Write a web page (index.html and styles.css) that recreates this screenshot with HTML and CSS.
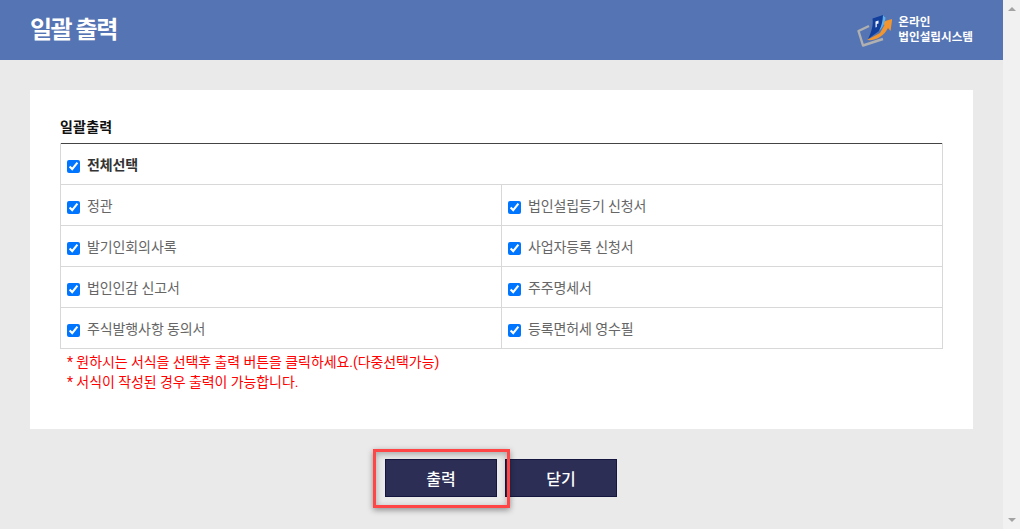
FILE: index.html
```html
<!DOCTYPE html>
<html lang="ko">
<head>
<meta charset="utf-8">
<title>일괄 출력</title>
<link rel="stylesheet" href="styles.css">
</head>
<body>
<div class="window">
  <main class="page">
    <header class="topbar">
      <h1 class="topbar-title">일괄 출력</h1>
      <div class="brand">
        <svg class="brand-logo" width="36" height="36" viewBox="0 1 36 36">
          <path d="M13 15 L2.5 20 L7 34.5 L27 28" fill="none" stroke="#b0b0b0" stroke-width="2.4" stroke-linejoin="round"/>
          <path d="M11 29 L24 22 L28.5 14 L25.5 11 L36.3 8 L34.5 20 L32 17 C28 25 20 30 11 29 Z" fill="#f0952f"/>
          <path d="M16.5 7.5 L27 4 L29 6 C28.5 12 26.5 17 23 20 L12 28 C15.5 21 17.5 14 16.5 7.5 Z" fill="#123f9c"/>
          <path d="M27 4 L29.5 6.5 C29 12 27 17 23 20 C25.5 15 26.8 10 27 4 Z" fill="#5fb0e8"/>
          <path d="M19.5 10.5 L22.5 9.6 L22.5 12.4 L20.8 12.9 L20.8 16 L19.5 16.4 Z" fill="#f2f5ff"/>
        </svg>
        <div class="brand-text">온라인<br>법인설립시스템</div>
      </div>
    </header>
    <section class="card">
      <h2 class="card-title">일괄출력</h2>
      <table class="forms">
        <tbody>
          <tr><td colspan="2" class="all"><label class="opt"><input type="checkbox" checked>전체선택</label></td></tr>
          <tr>
            <td><label class="opt"><input type="checkbox" checked>정관</label></td>
            <td><label class="opt"><input type="checkbox" checked>법인설립등기 신청서</label></td>
          </tr>
          <tr>
            <td><label class="opt"><input type="checkbox" checked>발기인회의사록</label></td>
            <td><label class="opt"><input type="checkbox" checked>사업자등록 신청서</label></td>
          </tr>
          <tr>
            <td><label class="opt"><input type="checkbox" checked>법인인감 신고서</label></td>
            <td><label class="opt"><input type="checkbox" checked>주주명세서</label></td>
          </tr>
          <tr>
            <td><label class="opt"><input type="checkbox" checked>주식발행사항 동의서</label></td>
            <td><label class="opt"><input type="checkbox" checked>등록면허세 영수필</label></td>
          </tr>
        </tbody>
      </table>
      <p class="note">* 원하시는 서식을 선택후 출력 버튼을 클릭하세요.(다중선택가능)</p>
      <p class="note">* 서식이 작성된 경우 출력이 가능합니다.</p>
    </section>
    <div class="actions">
      <div class="highlighted">
        <button class="btn" type="button">출력</button>
        <span class="highlight"></span>
      </div>
      <button class="btn" type="button">닫기</button>
    </div>
  </main>
  <aside class="scrollbar">
    <span class="arrow arrow-up"></span>
    <span class="arrow arrow-down"></span>
  </aside>
</div>
</body>
</html>
```
FILE: styles.css
```css
* { box-sizing: border-box; }
html, body { margin: 0; height: 100%; overflow: hidden; }
body {
  font-family: "Roboto", "Noto Sans CJK KR", sans-serif;
  background: #eaeaea;
}
.window { display: flex; height: 529px; }
.page { width: 1003px; flex: none; }
.topbar {
  height: 60px;
  background: #5574b3;
  display: flex;
  align-items: center;
  justify-content: space-between;
  padding: 0 30px;
}
.topbar-title {
  margin: -5px 0 0;
  font-size: 24px;
  font-weight: 700;
  color: #fff;
  letter-spacing: -1.5px;
}
.brand { display: flex; align-items: center; gap: 6px; }
.brand-logo { display: block; }
.brand-text {
  font-size: 11.6px;
  font-weight: 700;
  line-height: 15px;
  color: #fff;
  margin-top: -1px;
}
.card {
  margin: 30px 30px 0;
  height: 339px;
  background: #fff;
  padding: 28px 30px 0;
}
.card-title {
  margin: 0;
  height: 25px;
  font-size: 14px;
  line-height: 19px;
  font-weight: 700;
  letter-spacing: 0.2px;
  color: #111;
}
.forms {
  width: 883px;
  border-collapse: collapse;
  table-layout: fixed;
  border-top: 1px solid #444;
}
.forms td {
  height: 41px;
  padding: 0 0 0 6px;
  border: 1px solid #d8d8d8;
  font-size: 14px;
  letter-spacing: -0.1px;
  color: #666;
}
.forms tr:first-child td { border-top: 0; height: 41px; }
.forms .all { font-weight: 700; color: #333; }
.opt { display: flex; align-items: center; }
.opt input {
  width: 13px;
  height: 13px;
  margin: 5px 7px 0 0;
  accent-color: #0075ff;
}
.note {
  margin: 0 0 0 6px;
  padding-left: 1px;
  font-size: 14px;
  line-height: 20px;
  letter-spacing: -0.08px;
  color: #f00;
}
.forms + .note { margin-top: 3px; }
.actions {
  display: flex;
  justify-content: center;
  gap: 8px;
  margin-top: 30px;
  padding-right: 1px;
}
.highlighted { position: relative; display: flex; }
.btn {
  width: 112px;
  height: 38px;
  padding: 0;
  background: #2c2e55;
  border: 1px solid #14163f;
  color: #fff;
  font-family: inherit;
  font-size: 16px;
  font-weight: 500;
}
.highlight {
  position: absolute;
  left: -12px;
  top: -10px;
  width: 137px;
  height: 59px;
  border: 3px solid #ff4545;
  box-shadow: 0 2px 6px rgba(0, 0, 0, 0.4), inset 0 2px 6px rgba(0, 0, 0, 0.3);
  pointer-events: none;
}
.scrollbar {
  flex: 1;
  background: #f1f1f1;
  display: flex;
  flex-direction: column;
  justify-content: space-between;
  align-items: center;
  padding: 7px 0;
}
.arrow { width: 0; height: 0; border-left: 4px solid transparent; border-right: 4px solid transparent; }
.arrow-up { border-bottom: 4px solid #a3a3a3; }
.arrow-down { border-top: 4px solid #a3a3a3; }
```
